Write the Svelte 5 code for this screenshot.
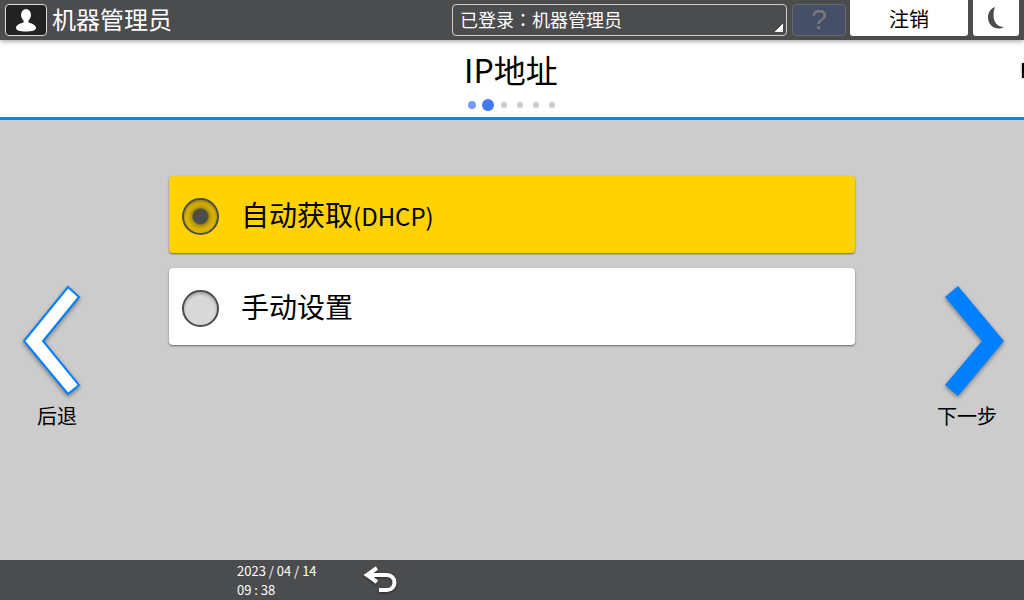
<script lang="ts">
  type Option = { value: string; label: string; note?: string };

  const user = '机器管理员';
  const steps = 6;

  const options: Option[] = [
    { value: 'dhcp', label: '自动获取', note: '(DHCP)' },
    { value: 'manual', label: '手动设置' }
  ];

  let step = 1;
  let selected = 'dhcp';

  function back() {
    step = Math.max(0, step - 1);
  }

  function next() {
    step = Math.min(steps - 1, step + 1);
  }
</script>

<div class="screen">
  <header class="bar">
    <button class="avatar" aria-label={user}>
      <svg width="20" height="23" viewBox="0 0 20 23" fill="#fff">
        <ellipse cx="10" cy="6" rx="5" ry="6" />
        <path d="M7.5 11h5v2.5c4.500 1 7.500 3 7.500 5.500 0 2.500-4 3.500-10 3.500S0 21.500 0 19c0-2.500 3-4.500 7.500-5.500z" />
      </svg>
    </button>
    <span class="user">{user}</span>

    <select class="status" aria-label="登录状态">
      <option>已登录：{user}</option>
    </select>
    <button class="help" disabled>?</button>
    <button class="tab logout">注销</button>
    <button class="tab moon" aria-label="节能">
      <svg width="18" height="24" viewBox="0 0 18 24" fill="#4b4c4e">
        <path d="M8 1C3 3 1 7 1 11.500 1 18 6 22.500 11.500 22.500c2 0 3.800-.5 5.500-1.500C10 21 6.500 15.500 6.500 9.500 6.500 6 7 3.500 8 1z" />
      </svg>
    </button>
  </header>

  <div class="title">
    <h1>IP地址</h1>
    <div class="dots">
      {#each Array(steps) as _, i}
        <span class="cell"><i class="dot" class:done={i < step} class:current={i === step}></i></span>
      {/each}
    </div>
    <span class="edge"></span>
  </div>

  <main>
    <button class="nav prev" on:click={back}>
      <svg width="64" height="116" viewBox="0 0 64 116">
        <path d="M48 3l11 10-36 44 36 44-11 9L4 57z" fill="#fff" stroke="#0080ff" stroke-width="2" />
      </svg>
      <span>后退</span>
    </button>

    <div class="options">
      {#each options as o (o.value)}
        <label class="option" class:selected={selected === o.value}>
          <input type="radio" name="address" value={o.value} bind:group={selected} />
          <span class="label">{o.label}{#if o.note}<small>{o.note}</small>{/if}</span>
        </label>
      {/each}
    </div>

    <button class="nav next" on:click={next}>
      <svg width="64" height="116" viewBox="0 0 64 116">
        <path d="M18 2l46 55-46 55L5 101l37-44L5 13z" fill="#0080ff" />
      </svg>
      <span>下一步</span>
    </button>
  </main>

  <footer>
    <div class="clock">
      <div>2023 / 04 / 14</div>
      <div>09 : 38</div>
    </div>
    <button class="return" aria-label="返回">
      <svg width="34" height="28" viewBox="0 0 34 28" fill="none" stroke="#fff" stroke-width="4">
        <path d="M4 9h20a7.500 7.500 0 0 1 0 15h-8" />
        <path d="M14 2L4 9l10 7" />
      </svg>
    </button>
  </footer>
</div>

<style>
  :global(body) { margin: 0; }

  .screen {
    min-height: 100vh;
    display: flex;
    flex-direction: column;
    background: #ccc;
    color: #000;
    font-family: "Noto Sans CJK SC", sans-serif;
  }
  button, select {
    box-sizing: border-box;
    margin: 0;
    padding: 0;
    border: 0;
    background: none;
    color: inherit;
    font-family: inherit;
  }
  svg { display: block; }

  .bar {
    position: relative;
    display: flex;
    align-items: center;
    height: 40px;
    padding: 0 5px;
    background: #4b4c4e;
    color: #fff;
    box-shadow: 0 1px 5px rgba(0, 0, 0, .4);
  }
  .avatar {
    display: grid;
    place-items: center;
    width: 42px;
    height: 32px;
    border: 1px solid #ddd;
    border-radius: 4px;
    background: #222;
  }
  .user { flex: 1; margin-left: 5px; padding-bottom: 2px; font-size: 24px; line-height: 38px; }
  .status {
    appearance: none;
    width: 335px;
    height: 32px;
    padding: 0 8px 2px 7px;
    border: 1px solid #ccc;
    border-radius: 4px;
    background: linear-gradient(135deg, transparent 50%, #fff 50%) right 3px bottom 3px / 8px 8px no-repeat;
    /* TC centres the full-width colon */
    font-family: "Noto Sans CJK TC", "Noto Sans CJK SC", sans-serif;
    font-size: 18px;
  }
  .help {
    width: 54px;
    height: 32px;
    margin: 0 4px 0 5px;
    border: 1px solid #68696b;
    border-radius: 4px;
    background: #464f68;
    color: #7b7b7b;
    font-family: "Liberation Sans", sans-serif;
    font-size: 28px;
    line-height: 28px;
  }
  .tab {
    align-self: flex-start;
    height: 36px;
    border-radius: 0 0 3px 3px;
    background: #fff;
    color: #000;
    font-size: 20px;
  }
  .logout { width: 118px; }
  .moon { display: grid; place-items: center; width: 46px; margin-left: 5px; }

  .title {
    box-sizing: border-box;
    display: grid;
    grid-template-columns: 1fr auto 1fr;
    align-content: start;
    height: 80px;
    border-bottom: 3px solid #1684d9;
    background: #fff;
  }
  h1 { grid-column: 2; margin: 5px 0 3px; font-size: 32px; font-weight: 400; line-height: 48px; }
  .dots { grid-column: 2; grid-row: 2; display: flex; justify-content: center; }
  .cell { display: grid; place-items: center; width: 16px; height: 18px; }
  .dot { width: 6px; height: 6px; border-radius: 50%; background: #ccc; }
  .dot.done { width: 8px; height: 8px; background: #759bf3; }
  .dot.current { width: 12px; height: 12px; background: #4179f5; }
  .edge {
    grid-column: 3;
    grid-row: 1;
    justify-self: end;
    width: 2px;
    height: 15px;
    margin-top: 23px;
    background: #000;
    box-shadow: 0 0 3px rgba(0, 0, 0, .5);
  }

  main {
    flex: 1;
    display: grid;
    grid-template-columns: 169px 1fr 169px;
    align-items: start;
    padding: 56px 0;
  }
  .nav {
    display: flex;
    flex-direction: column;
    width: 74px;
    margin: 108px 20px 0;
    font-size: 20px;
    line-height: 32px;
    text-align: center;
  }
  .nav svg { filter: drop-shadow(0 2px 2px rgba(0, 0, 0, .4)); }
  .nav span { align-self: center; }
  .next { justify-self: end; }
  .next svg { align-self: flex-end; }

  .options { display: flex; flex-direction: column; gap: 15px; }
  .option {
    box-sizing: border-box;
    display: flex;
    align-items: center;
    gap: 22px;
    height: 77px;
    padding: 0 13px;
    border-radius: 4px;
    background: #fff;
    box-shadow: 0 1px 2px rgba(0, 0, 0, .5);
    font-size: 28px;
  }
  .option.selected { background: #ffd203; }
  .label { padding-bottom: 1px; }
  small { font-size: 24px; }
  input {
    appearance: none;
    box-sizing: border-box;
    width: 37px;
    height: 37px;
    margin: 4px 0 0;
    border: 2px solid #4b4c4e;
    border-radius: 50%;
    background: #d8d8d8;
    box-shadow: inset 0 2px 3px rgba(0, 0, 0, .25);
  }
  input:checked {
    background: radial-gradient(circle, #4b4c4e 7px, #b39405 9px, #d9b308 13px);
  }

  footer {
    display: flex;
    height: 40px;
    padding-left: 237px;
    background: #4b4c4e;
    color: #fff;
  }
  .clock { width: 126px; padding-top: 1px; font-size: 13px; line-height: 19px; }
  .return { filter: drop-shadow(0 1px 1px rgba(0, 0, 0, .5)); }
</style>
